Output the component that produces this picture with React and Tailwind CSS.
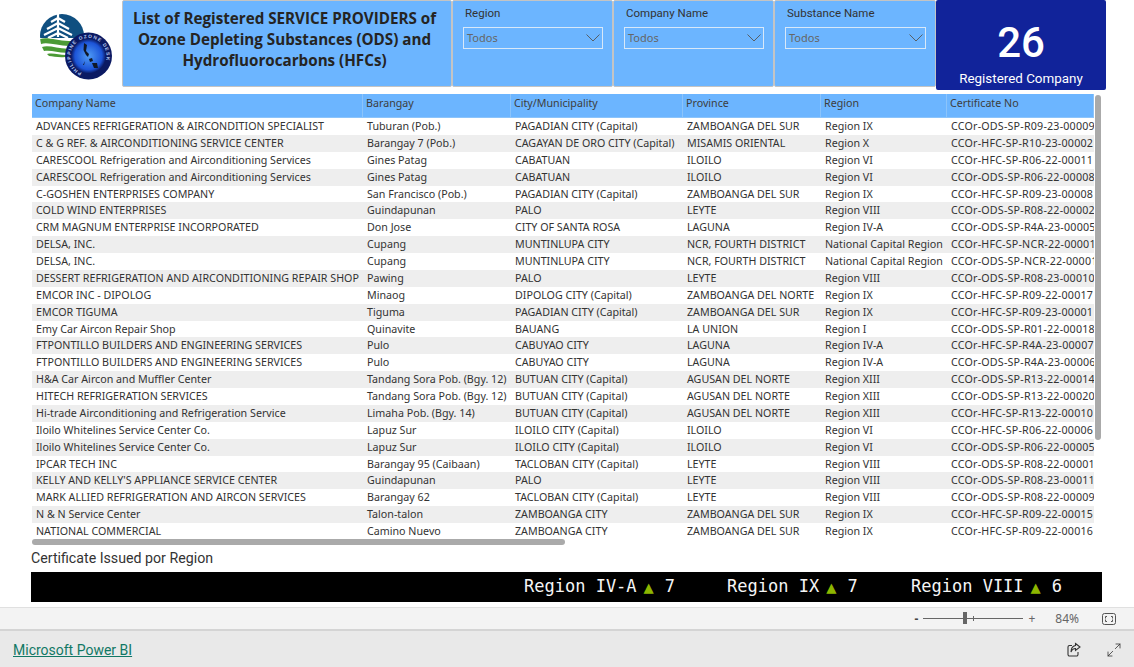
import React from 'react';
import { Maximize2 } from 'lucide-react';

const rows = [
  ['ADVANCES REFRIGERATION & AIRCONDITION SPECIALIST', 'Tuburan (Pob.)', 'PAGADIAN CITY (Capital)', 'ZAMBOANGA DEL SUR', 'Region IX', 'CCOr-ODS-SP-R09-23-00009'],
  ['C & G REF. & AIRCONDITIONING SERVICE CENTER', 'Barangay 7 (Pob.)', 'CAGAYAN DE ORO CITY (Capital)', 'MISAMIS ORIENTAL', 'Region X', 'CCOr-HFC-SP-R10-23-00002'],
  ['CARESCOOL Refrigeration and Airconditioning Services', 'Gines Patag', 'CABATUAN', 'ILOILO', 'Region VI', 'CCOr-HFC-SP-R06-22-00011'],
  ['CARESCOOL Refrigeration and Airconditioning Services', 'Gines Patag', 'CABATUAN', 'ILOILO', 'Region VI', 'CCOr-ODS-SP-R06-22-00008'],
  ['C-GOSHEN ENTERPRISES COMPANY', 'San Francisco (Pob.)', 'PAGADIAN CITY (Capital)', 'ZAMBOANGA DEL SUR', 'Region IX', 'CCOr-HFC-SP-R09-23-00008'],
  ['COLD WIND ENTERPRISES', 'Guindapunan', 'PALO', 'LEYTE', 'Region VIII', 'CCOr-ODS-SP-R08-22-00002'],
  ['CRM MAGNUM ENTERPRISE INCORPORATED', 'Don Jose', 'CITY OF SANTA ROSA', 'LAGUNA', 'Region IV-A', 'CCOr-ODS-SP-R4A-23-00005'],
  ['DELSA, INC.', 'Cupang', 'MUNTINLUPA CITY', 'NCR, FOURTH DISTRICT', 'National Capital Region', 'CCOr-HFC-SP-NCR-22-00001'],
  ['DELSA, INC.', 'Cupang', 'MUNTINLUPA CITY', 'NCR, FOURTH DISTRICT', 'National Capital Region', 'CCOr-ODS-SP-NCR-22-00001'],
  ['DESSERT REFRIGERATION AND AIRCONDITIONING REPAIR SHOP', 'Pawing', 'PALO', 'LEYTE', 'Region VIII', 'CCOr-ODS-SP-R08-23-00010'],
  ['EMCOR INC - DIPOLOG', 'Minaog', 'DIPOLOG CITY (Capital)', 'ZAMBOANGA DEL NORTE', 'Region IX', 'CCOr-HFC-SP-R09-22-00017'],
  ['EMCOR TIGUMA', 'Tiguma', 'PAGADIAN CITY (Capital)', 'ZAMBOANGA DEL SUR', 'Region IX', 'CCOr-HFC-SP-R09-23-00001'],
  ['Emy Car Aircon Repair Shop', 'Quinavite', 'BAUANG', 'LA UNION', 'Region I', 'CCOr-ODS-SP-R01-22-00018'],
  ['FTPONTILLO BUILDERS AND ENGINEERING SERVICES', 'Pulo', 'CABUYAO CITY', 'LAGUNA', 'Region IV-A', 'CCOr-HFC-SP-R4A-23-00007'],
  ['FTPONTILLO BUILDERS AND ENGINEERING SERVICES', 'Pulo', 'CABUYAO CITY', 'LAGUNA', 'Region IV-A', 'CCOr-ODS-SP-R4A-23-00006'],
  ['H&A Car Aircon and Muffler Center', 'Tandang Sora Pob. (Bgy. 12)', 'BUTUAN CITY (Capital)', 'AGUSAN DEL NORTE', 'Region XIII', 'CCOr-ODS-SP-R13-22-00014'],
  ['HITECH REFRIGERATION SERVICES', 'Tandang Sora Pob. (Bgy. 12)', 'BUTUAN CITY (Capital)', 'AGUSAN DEL NORTE', 'Region XIII', 'CCOr-ODS-SP-R13-22-00020'],
  ['Hi-trade Airconditioning and Refrigeration Service', 'Limaha Pob. (Bgy. 14)', 'BUTUAN CITY (Capital)', 'AGUSAN DEL NORTE', 'Region XIII', 'CCOr-HFC-SP-R13-22-00010'],
  ['Iloilo Whitelines Service Center Co.', 'Lapuz Sur', 'ILOILO CITY (Capital)', 'ILOILO', 'Region VI', 'CCOr-HFC-SP-R06-22-00006'],
  ['Iloilo Whitelines Service Center Co.', 'Lapuz Sur', 'ILOILO CITY (Capital)', 'ILOILO', 'Region VI', 'CCOr-ODS-SP-R06-22-00005'],
  ['IPCAR TECH INC', 'Barangay 95 (Caibaan)', 'TACLOBAN CITY (Capital)', 'LEYTE', 'Region VIII', 'CCOr-ODS-SP-R08-22-00001'],
  ["KELLY AND KELLY'S APPLIANCE SERVICE CENTER", 'Guindapunan', 'PALO', 'LEYTE', 'Region VIII', 'CCOr-ODS-SP-R08-23-00011'],
  ['MARK ALLIED REFRIGERATION AND AIRCON SERVICES', 'Barangay 62', 'TACLOBAN CITY (Capital)', 'LEYTE', 'Region VIII', 'CCOr-ODS-SP-R08-22-00009'],
  ['N & N Service Center', 'Talon-talon', 'ZAMBOANGA CITY', 'ZAMBOANGA DEL SUR', 'Region IX', 'CCOr-HFC-SP-R09-22-00015'],
  ['NATIONAL COMMERCIAL', 'Camino Nuevo', 'ZAMBOANGA CITY', 'ZAMBOANGA DEL SUR', 'Region IX', 'CCOr-HFC-SP-R09-22-00016'],
];

const headers = ['Company Name', 'Barangay', 'City/Municipality', 'Province', 'Region', 'Certificate No'];
const widths = ['w-[331px]', 'w-[148px]', 'w-[172px]', 'w-[138px]', 'w-[126px]', 'w-[147px]'];

const Slicer = ({ label, width }) => (
  <div className={`${width} h-[87px] bg-[#6cb5ff] border border-[#c4c4c4] rounded-[2px] pl-[10px] pr-[9px] pt-[5px]`}>
    <div className="ml-[2px] text-[11.5px] leading-[14px] text-[#333] font-['Roboto',sans-serif]">{label}</div>
    <div className="mt-[7px] h-[22px] border border-[#d8e8f8] flex items-center justify-between pl-[3px] pr-[2px]">
      <span className="text-[11px] text-[#666]">Todos</span>
      <svg width="14" height="8" viewBox="0 0 14 8" fill="none" stroke="#555" strokeWidth="0.9">
        <path d="M0.5 0.5 L7 7 L13.5 0.5" />
      </svg>
    </div>
  </div>
);

const Logo = () => (
  <svg width="74" height="70" viewBox="0 0 74 70">
    <defs>
      <radialGradient id="desk" cx="50%" cy="50%" r="50%">
        <stop offset="0%" stopColor="#4f9bf5" />
        <stop offset="58%" stopColor="#1c54d8" />
        <stop offset="74%" stopColor="#0b1a63" />
      </radialGradient>
      <path id="ring" d="M49.5 62 a18 18 0 1 1 0.01 0" />
    </defs>
    <circle cx="23" cy="24" r="22" fill="#0f4f80" />
    <path d="M1 26 a22 22 0 0 0 44 0 z" fill="#ffffff" />
    <path d="M19 2 L19 25 M19 6 L12 10 M19 6 L26 10 M19 11 L8 17 M19 11 L30 17 M19 16 L5 23 M19 16 L33 23 M19 21 L9 26 M19 21 L29 26" stroke="#fff" strokeWidth="2.2" fill="none" />
    <path d="M1.2 27 C12 24 24 33 44 27 L43 32 C26 38 12 29 2 32 Z" fill="#4b9a35" />
    <path d="M3 35 C12 32 24 40 40 35 L37 39 C24 44 14 37 5 39 Z" fill="#4b9a35" />
    <path d="M8 42 C16 40 24 45 33 42 L26 45 C20 46 14 44 10 44 Z" fill="#4b9a35" />
    <circle cx="49.5" cy="44" r="23.5" fill="url(#desk)" />
    <path d="M45 31 L48 33 L47 39 L50 42 L49 45 L47 43 L44.5 38 Z" fill="#101828" />
    <path d="M50 47 L53 46 L54 49 L51 50 Z M53 51 L58 51 L59 56 L55 56 Z M46 49 L44 53 L45 53 Z" fill="#101828" />
    <text fontSize="4.8" fill="#b9cdf5" fontWeight="700" fontFamily="'Liberation Sans',sans-serif" letterSpacing="1.1">
      <textPath href="#ring" startOffset="6%">PHILIPPINE OZONE DESK</textPath>
    </text>
  </svg>
);

const ShareIcon = () => (
  <svg width="16" height="16" viewBox="0 0 16 16" fill="none" stroke="#333" strokeWidth="1.1">
    <path d="M6 3.5 H3.5 A1.5 1.5 0 0 0 2 5 V12.5 A1.5 1.5 0 0 0 3.5 14 H10.5 A1.5 1.5 0 0 0 12 12.5 V10" />
    <path d="M9.5 1.5 L14 5 L9.5 8.5 V6.5 C7.5 6.5 6 7.5 5 10 C5 6.5 7 4 9.5 3.5 Z" />
  </svg>
);

const FitIcon = () => (
  <svg width="14" height="12" viewBox="0 0 14 12" fill="none" stroke="#555" strokeWidth="1">
    <rect x="0.5" y="0.5" width="13" height="11" rx="2" />
    <path d="M5 3.5 H3.5 V5.5 M9 3.5 H10.5 V5.5 M5 8.5 H3.5 V6.5 M9 8.5 H10.5 V6.5" />
  </svg>
);

const Ticker = ({ label, value, width }) => (
  <div className={`${width} flex items-center gap-[7px]`}>
    <span>{label}</span>
    <span className="text-[#8db600] text-[17px] leading-none">▲</span>
    <span className="ml-[4px]">{value}</span>
  </div>
);

export default function App() {
  return (
    <div className="w-[1134px] h-[667px] bg-white overflow-hidden flex flex-col font-['Noto_Sans',sans-serif]">
      <div className="h-[607px] flex flex-col">
        {/* top row */}
        <div className="flex h-[90px] items-start">
          <div className="w-[122px] h-[87px] pl-[39px] pt-[12px] shrink-0">
            <Logo />
          </div>
          <div className="w-[330px] h-[87px] pb-[8px] pr-[5px] bg-[#6cb5ff] border border-[#c4c4c4] rounded-[2px] flex items-center justify-center text-center text-[15.2px] leading-[21px] font-bold text-[#252423] font-['Open_Sans',sans-serif]">
            <div>List of Registered SERVICE PROVIDERS of<br />Ozone Depleting Substances (ODS) and<br />Hydrofluorocarbons (HFCs)</div>
          </div>
          <Slicer label="Region" width="w-[161px]" />
          <Slicer label="Company Name" width="w-[161px]" />
          <Slicer label="Substance Name" width="w-[162px]" />
          <div className="w-[170px] h-[90px] bg-[#11239a] rounded-[2px] flex flex-col items-center text-white">
            <div className="mt-[18px] text-[42px] leading-[50px] font-medium font-['Roboto',sans-serif]">26</div>
            <div className="text-[13.4px] leading-[17px] mt-[2px] font-['Roboto',sans-serif]">Registered Company</div>
          </div>
        </div>

        {/* table */}
        <div className="relative ml-[32px] mt-[4px] w-[1070px] h-[451px] overflow-hidden">
          <div className="flex h-[24px] bg-[#6cb5ff] w-[1062px] overflow-hidden border-b border-[#8cc4fb]">
            {headers.map((h, i) => (
              <div key={h} className={`${widths[i]} shrink-0 pl-[3px] pt-[2px] text-[10.7px] leading-[14px] text-[#3d3d3d] border-r border-[#8cc4fb]`}>{h}</div>
            ))}
          </div>
          <div className="w-[1062px] overflow-hidden">
            {rows.map((r, i) => (
              <div key={i} className={`flex h-[16.875px] ${i % 2 ? 'bg-[#eeeeee]' : 'bg-white'}`}>
                {r.map((c, j) => (
                  <div key={j} className={`${widths[j]} shrink-0 pl-[4px] text-[10.7px] leading-[17px] text-[#333] whitespace-nowrap overflow-hidden ${j === 5 ? 'tracking-[0.2px]' : ''}`}>{c}</div>
                ))}
              </div>
            ))}
          </div>
          {/* scrollbars */}
          <div className="absolute left-0 top-[445px] w-[533px] h-[6px] rounded-full bg-[#aaaaaa]" />
          <div className="absolute left-[1063px] top-[1px] w-[6px] h-[345px] rounded-full bg-[#aaaaaa]" />
        </div>

        <div className="ml-[31px] mt-[5px] h-[16px] text-[14.2px] leading-[16px] text-[#333] font-['Roboto',sans-serif]">Certificate Issued por Region</div>
        <div className="ml-[31px] mt-[6px] w-[1071px] h-[30px] bg-black flex items-center pl-[493px] text-[17px] text-[#f5f5f5] font-['DejaVu_Sans_Mono',monospace]">
          <Ticker label="Region IV-A" value="7" width="w-[203px]" />
          <Ticker label="Region IX" value="7" width="w-[184px]" />
          <Ticker label="Region VIII" value="6" width="w-[180px]" />
        </div>
      </div>

      {/* zoom bar */}
      <div className="h-[24px] bg-[#f3f3f3] border-t border-[#e0e0e0] border-b-2 border-b-[#d4d4d4] flex items-center justify-end pr-[18px] text-[12px] text-[#666]">
        <span className="text-[#444] font-bold">-</span>
        <div className="relative w-[100px] h-px bg-[#666] mx-[5px]">
          <div className="absolute left-[40px] -top-[6px] w-[4px] h-[12px] bg-[#666]" />
          <div className="absolute left-[50px] -top-[2px] w-px h-[5px] bg-[#666]" />
        </div>
        <span>+</span>
        <span className="ml-[20px]">84%</span>
        <div className="ml-[23px] flex"><FitIcon /></div>
      </div>

      {/* footer */}
      <div className="flex-1 bg-[#e9e9e9] flex items-center justify-between pl-[13px] pr-[12px] pt-[3px]">
        <a className="text-[14px] text-[#117865] underline font-['Roboto',sans-serif]">Microsoft Power BI</a>
        <div className="flex items-center gap-[24px] -mt-[2px]">
          <ShareIcon />
          <Maximize2 className="w-[16px] h-[16px] text-[#333]" strokeWidth={1.2} />
        </div>
      </div>
    </div>
  );
}
